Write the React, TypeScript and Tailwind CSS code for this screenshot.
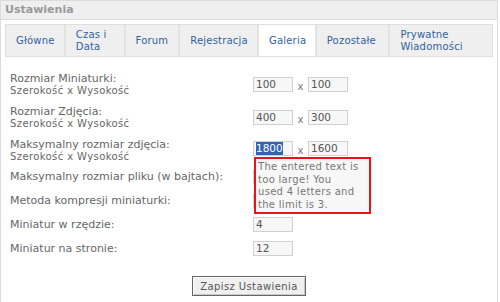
const tabs = [
  { label: ["Główne"], w: "w-[58px]" },
  { label: ["Czas i", "Data"], w: "w-[60px]" },
  { label: ["Forum"], w: "w-[55px]" },
  { label: ["Rejestracja"], w: "w-[79px]" },
  { label: ["Galeria"], w: "w-[58px]", active: true },
  { label: ["Pozostałe"], w: "w-[74px]" },
  { label: ["Prywatne", "Wiadomości"], w: "w-[104px]" },
];

function Field({ value, selected }: { value: string; selected?: boolean }) {
  return (
    <div className="w-[40px] h-[15px] border border-[#d0d0d0] bg-[#f7f7f7] pl-[2px] flex items-center text-[10.5px] leading-[13px] text-[#555]">
      {selected ? <span className="bg-[#3563b3] text-white">{value}</span> : value}
    </div>
  );
}

function SizeLabel({ title }: { title: string }) {
  return (
    <div className="w-[243px] pt-[6px]">
      <div className="text-[11px] leading-[13px] text-[#666]">{title}</div>
      <div className="text-[10px] leading-[12px] tracking-[0.4px] text-[#666]">Szerokość x Wysokość</div>
    </div>
  );
}

function SizeInputs({ a, b, selected }: { a: string; b: string; selected?: boolean }) {
  return (
    <div className="flex items-start">
      <Field value={a} selected={selected} />
      <span className="w-[15px] text-center pt-[3px] text-[10px] leading-[13px] text-[#777]">x</span>
      <Field value={b} />
    </div>
  );
}

export default function App() {
  return (
    <div className="w-[500px] h-[302px] overflow-hidden bg-white font-['DejaVu_Sans',sans-serif]">
      <div className="w-[498px] min-h-[310px] border border-[#dcdcdc] relative">
        {/* header */}
        <div className="h-[19px] bg-[#efefef] border-b border-[#dcdcdc] pl-[4px] flex items-center text-[11px] font-bold text-[#999]">
          Ustawienia
        </div>

        {/* tabs */}
        <div className="mx-[4px] mt-[4px] h-[33px] flex border border-[#dedede] bg-[#efefef]">
          {tabs.map((t, i) => (
            <div
              key={i}
              className={`${t.w} h-full flex items-center pl-[10px] text-[10px] leading-[12px] tracking-[0.2px] text-[#2f62a0] ${
                i > 0 ? "border-l-2 border-[#e2e2e2]" : ""
              } ${t.active ? "bg-white" : ""}`}
            >
              <div>
                {t.label.map((l) => (
                  <div key={l}>{l}</div>
                ))}
              </div>
            </div>
          ))}
        </div>

        {/* form */}
        <div className="pl-[9px] pt-[9px]">
          <div className="flex h-[33px]">
            <SizeLabel title="Rozmiar Miniaturki:" />
            <div className="pt-[11px]">
              <SizeInputs a="100" b="100" />
            </div>
          </div>
          <div className="flex h-[33px]">
            <SizeLabel title="Rozmiar Zdjęcia:" />
            <div className="pt-[11px]">
              <SizeInputs a="400" b="300" />
            </div>
          </div>
          <div className="flex h-[32px]">
            <SizeLabel title="Maksymalny rozmiar zdjęcia:" />
            <div className="pt-[9px]">
              <SizeInputs a="1800" b="1600" selected />
            </div>
          </div>
          {/* the first two inputs sit under the tooltip, only their edge shows */}
          {[
            ["Maksymalny rozmiar pliku (w bajtach):", ""],
            ["Metoda kompresji miniaturki:", ""],
            ["Miniatur w rzędzie:", "4"],
            ["Miniatur na stronie:", "12"],
          ].map(([label, value]) => (
            <div key={label} className="flex items-center h-[24px]">
              <div className="w-[243px] text-[11px] leading-[13px] text-[#666]">{label}</div>
              <Field value={value} />
            </div>
          ))}

          <div className="flex justify-center pt-[16px] pr-[9px]">
            <button className="w-[114px] h-[20px] border border-[#666] bg-[#f0f0f0] shadow-[inset_1px_1px_0_#fff,inset_-1px_-1px_0_#c8c8c8] text-[10px] tracking-[0.4px] text-[#555]">
              Zapisz Ustawienia
            </button>
          </div>
        </div>

        {/* validation tooltip */}
        <div className="absolute left-[253px] top-[156px] w-[117px] h-[57px] border-2 border-[#e8141a] bg-[#f7f7f7] px-[2px] pt-[2px] text-[10px] leading-[12.7px] tracking-[0.3px] text-[#777]">
          The entered text is
          <br />
          too large! You
          <br />
          used 4 letters and
          <br />
          the limit is 3.
        </div>
      </div>
    </div>
  );
}
